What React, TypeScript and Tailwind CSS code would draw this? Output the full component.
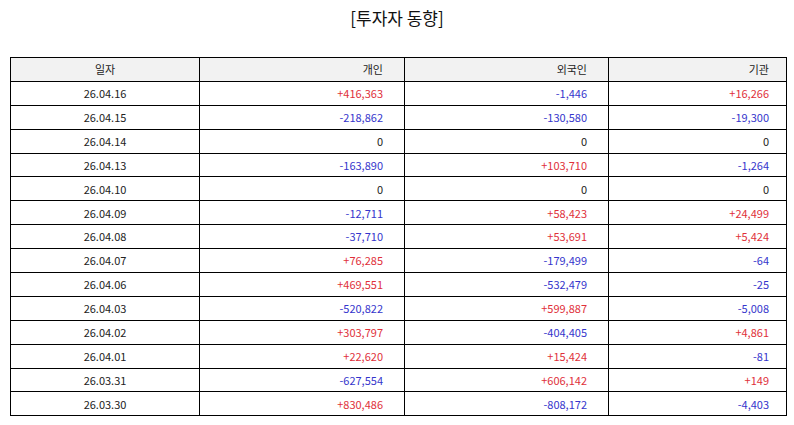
const rows: [string, string, string, string][] = [
  ["26.04.16", "+416,363", "-1,446", "+16,266"],
  ["26.04.15", "-218,862", "-130,580", "-19,300"],
  ["26.04.14", "0", "0", "0"],
  ["26.04.13", "-163,890", "+103,710", "-1,264"],
  ["26.04.10", "0", "0", "0"],
  ["26.04.09", "-12,711", "+58,423", "+24,499"],
  ["26.04.08", "-37,710", "+53,691", "+5,424"],
  ["26.04.07", "+76,285", "-179,499", "-64"],
  ["26.04.06", "+469,551", "-532,479", "-25"],
  ["26.04.03", "-520,822", "+599,887", "-5,008"],
  ["26.04.02", "+303,797", "-404,405", "+4,861"],
  ["26.04.01", "+22,620", "+15,424", "-81"],
  ["26.03.31", "-627,554", "+606,142", "+149"],
  ["26.03.30", "+830,486", "-808,172", "-4,403"],
];

function valueColor(v: string): string {
  if (v.startsWith("+")) return "text-[#e0303a]";
  if (v.startsWith("-")) return "text-[#3535cc]";
  return "text-[#222]";
}

export default function App() {
  return (
    <div className="w-[794px] h-[425px] bg-white font-['Noto_Sans_CJK_KR','Noto_Sans',sans-serif] text-[#222]">
      <h1 className="pt-[5px] h-[57px] text-center text-[17px] leading-[26px] text-[#111]">[투자자 동향]</h1>
      <table className="ml-[10px] w-[776px] border-collapse table-fixed text-[11px]">
        <colgroup>
          <col className="w-[189px]" />
          <col className="w-[205px]" />
          <col className="w-[204px]" />
          <col className="w-[178px]" />
        </colgroup>
        <thead>
          <tr className="h-[23.9px] bg-[#f2f2f2]">
            <th className="border border-black font-normal text-center">일자</th>
            <th className="border border-black font-normal text-right pr-[21px]">개인</th>
            <th className="border border-black font-normal text-right pr-[21px]">외국인</th>
            <th className="border border-black font-normal text-right pr-[17px]">기관</th>
          </tr>
        </thead>
        <tbody>
          {rows.map((r) => (
            <tr key={r[0]} className="h-[23.9px]">
              <td className="border border-black text-center">{r[0]}</td>
              <td className={`border border-black text-right pr-[21px] ${valueColor(r[1])}`}>{r[1]}</td>
              <td className={`border border-black text-right pr-[21px] ${valueColor(r[2])}`}>{r[2]}</td>
              <td className={`border border-black text-right pr-[17px] ${valueColor(r[3])}`}>{r[3]}</td>
            </tr>
          ))}
        </tbody>
      </table>
    </div>
  );
}
